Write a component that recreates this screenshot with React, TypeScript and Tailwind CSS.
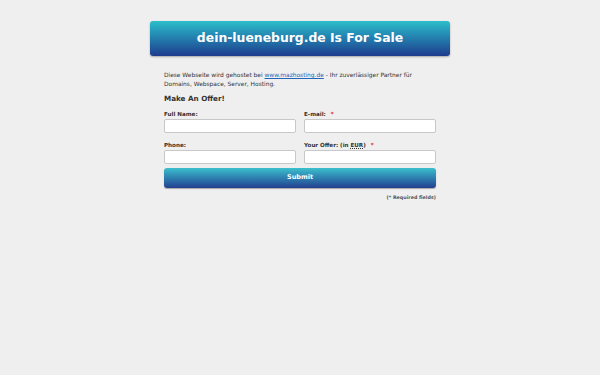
export default function App() {
  const font = { fontFamily: '"DejaVu Sans", Verdana, sans-serif' }
  return (
    <div className="min-h-[375px] w-full bg-[#efefef] pt-[21px]" style={font}>
      <div className="mx-auto w-[300px]">
        <div className="flex h-[35px] items-center justify-center rounded-[3px] bg-gradient-to-b from-[#2cbfcb] to-[#1f3b8d] shadow-[0_1px_2px_rgba(0,0,0,0.3)]">
          <h1 className="text-[12.4px] font-bold text-white">dein-lueneburg.de Is For Sale</h1>
        </div>
      </div>
      <div className="mx-auto mt-[15px] w-[272px]">
        <p className="text-[5.9px] leading-[9px] text-[#333]">
          Diese Webseite wird gehostet bei{' '}
          <a href="#" className="text-[#2266bb] underline">www.mazhosting.de</a>
          {' '}- Ihr zuverlässiger Partner für Domains, Webspace, Server, Hosting.
        </p>
        <h2 className="mt-[5px] text-[7.2px] leading-[9px] font-bold text-[#333]">Make An Offer!</h2>
        <div className="mt-[8px] grid grid-cols-2 gap-x-[8px] gap-y-[9px]">
          <label className="flex flex-col gap-[1px]">
            <span className="text-[5.6px] leading-[7px] font-bold text-[#333]">Full Name:</span>
            <input className="h-[14px] rounded-[2px] border border-[#c8c8c8] bg-white" />
          </label>
          <label className="flex flex-col gap-[1px]">
            <span className="text-[5.6px] leading-[7px] font-bold text-[#333]">E-mail: <span className="ml-[3px] text-[#dd2222]">*</span></span>
            <input className="h-[14px] rounded-[2px] border border-[#c8c8c8] bg-white" />
          </label>
          <label className="flex flex-col gap-[1px]">
            <span className="text-[5.6px] leading-[7px] font-bold text-[#333]">Phone:</span>
            <input className="h-[14px] rounded-[2px] border border-[#c8c8c8] bg-white" />
          </label>
          <label className="flex flex-col gap-[1px]">
            <span className="text-[5.6px] leading-[7px] font-bold text-[#333]">Your Offer: (in <span className="underline decoration-dotted">EUR</span>) <span className="ml-[3px] text-[#dd2222]">*</span></span>
            <input className="h-[14px] rounded-[2px] border border-[#c8c8c8] bg-white" />
          </label>
        </div>
        <button className="mt-[4px] flex h-[20px] w-full items-center justify-center rounded-[3px] bg-gradient-to-b from-[#3cc0cc] to-[#243f90] text-[6.5px] font-bold text-white shadow-[0_1px_1px_rgba(0,0,0,0.3)]">
          Submit
        </button>
        <p className="mt-[6px] text-right text-[4.8px] leading-[7px] font-bold text-[#555]">(* Required fields)</p>
      </div>
    </div>
  )
}
